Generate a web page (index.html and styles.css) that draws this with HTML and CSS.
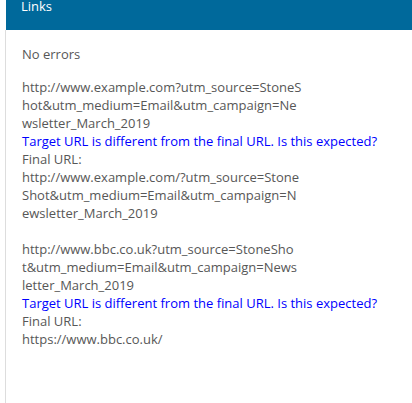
FILE: index.html
```html
<!DOCTYPE html>
<html>
<head>
<meta charset="utf-8">
<link rel="stylesheet" href="styles.css">
</head>
<body>
<div class="panel">
  <div class="panel-heading">Links</div>
  <div class="panel-body">
    <p class="status">No errors</p>
    <div class="link-item">
      <div class="url"><span>http://www.example.com?utm_source=StoneS</span><span>hot&amp;utm_medium=Email&amp;utm_campaign=Ne</span><span>wsletter_March_2019</span></div>
      <div class="warning">Target URL is different from the final URL. Is this expected?</div>
      <div class="label">Final URL:</div>
      <div class="url"><span>http://www.example.com/?utm_source=Stone</span><span>Shot&amp;utm_medium=Email&amp;utm_campaign=N</span><span>ewsletter_March_2019</span></div>
    </div>
    <div class="link-item">
      <div class="url"><span>http://www.bbc.co.uk?utm_source=StoneSho</span><span>t&amp;utm_medium=Email&amp;utm_campaign=News</span><span>letter_March_2019</span></div>
      <div class="warning">Target URL is different from the final URL. Is this expected?</div>
      <div class="label">Final URL:</div>
      <div class="url"><span>https://www.bbc.co.uk/</span></div>
    </div>
  </div>
</div>
</body>
</html>
```
FILE: styles.css
```css
html, body {
  margin: 0;
  padding: 0;
  background: #ffffff;
}
body {
  font-family: "Open Sans", "Liberation Sans", sans-serif;
  font-size: 13px;
  color: #575757;
}
.panel {
  margin-left: 5px;
  height: 403px;
  display: flex;
  flex-direction: column;
}
.panel-heading {
  margin-left: 1px;
  height: 30px;
  padding: 0 15px;
  background: #00699b;
  color: #ffffff;
  line-height: 12px;
}
.panel-body {
  flex: 1;
  border-left: 1px solid #dddddd;
  padding: 15px 16px 0 16px;
  line-height: 18px;
}
.status {
  margin: 0 0 15px 0;
}
.link-item {
  margin-bottom: 18px;
}
.url span {
  display: block;
  white-space: nowrap;
}
.warning {
  color: #0000ff;
}
```
